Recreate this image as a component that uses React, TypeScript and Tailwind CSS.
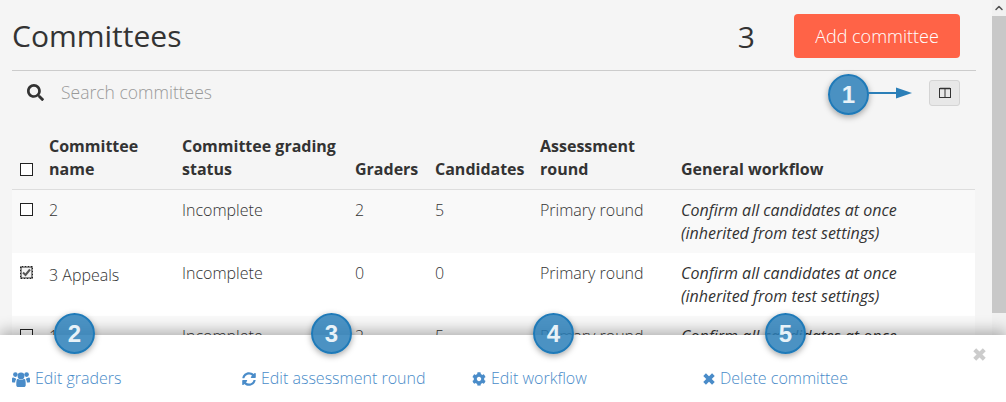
import { FaCog, FaSearch, FaSyncAlt } from "react-icons/fa";
import { ChevronUp } from "lucide-react";
import type { ReactNode } from "react";

const rows = [
  { name: "2", status: "Incomplete", graders: "2", candidates: "5", checked: false, bg: "bg-[#f9f9f9]" },
  { name: "3 Appeals", status: "Incomplete", graders: "0", candidates: "0", checked: true, bg: "bg-white" },
  { name: "1", status: "Incomplete", graders: "2", candidates: "5", checked: false, bg: "bg-[#f9f9f9]" },
];

function Checkbox({ checked }: { checked?: boolean }) {
  if (checked) {
    return (
      <svg viewBox="0 0 13 13" className="block w-[13px] h-[13px]">
        <rect x="0" y="0" width="13" height="13" fill="#222" />
        <rect x="1.5" y="1.5" width="10" height="10" fill="#f4f4f4" />
        <path d="M0.5 0.5h12v12h-12z" fill="none" stroke="#fff" strokeDasharray="1 2" />
        <path d="M3 6.5l2.5 2.5L10 3.5" fill="none" stroke="#555" strokeWidth="2" />
      </svg>
    );
  }
  return <span className="block w-[13px] h-[13px] border border-[#222] bg-white" />;
}

function TimesIcon({ className }: { className: string }) {
  return (
    <svg viewBox="0 0 12 12" className={className}>
      <path d="M1.6 1.6l8.8 8.8M10.4 1.6l-8.8 8.8" fill="none" stroke="currentColor" strokeWidth="3.8" />
    </svg>
  );
}

function UsersIcon({ className }: { className: string }) {
  return (
    <svg viewBox="0 0 18 16" className={className} fill="currentColor">
      <circle cx="9" cy="5" r="3.4" />
      <circle cx="3.4" cy="3.6" r="2.3" />
      <circle cx="14.6" cy="3.6" r="2.3" />
      <path d="M4.6 9.4c0-1 1-1.5 2-1.2.8.5 1.6.7 2.4.7s1.6-.2 2.4-.7c1-.3 2 .2 2 1.2.3 1.3.4 3 .3 4.8 0 1-.8 1.8-1.8 1.8H6.1c-1 0-1.8-.8-1.8-1.8-.1-1.8 0-3.5.3-4.8z" />
      <path d="M0 8c0-1 .6-1.6 1.4-1.4.7.4 1.4.6 2.1.6.3.4.5.8.6 1-.6.8-1 2-1 3.2H1c-.6 0-1-.4-1-1V8zM18 8c0-1-.6-1.6-1.4-1.4-.7.4-1.4.6-2.1.6-.3.4-.5.8-.6 1 .6.8 1 2 1 3.2h2.1c.6 0 1-.4 1-1V8z" />
    </svg>
  );
}

function Badge({ n, className }: { n: number; className: string }) {
  return (
    <div
      className={`absolute w-[41px] h-[41px] rounded-full border-2 border-[#1f7ab8] bg-[#2b7fb8]/85 text-[#e8f2f8] flex items-center justify-center text-[24px] font-bold shadow-[0_2px_6px_rgba(0,0,0,0.35)] [font-family:'Liberation_Sans',sans-serif] ${className}`}
    >
      {n}
    </div>
  );
}

function Action({ icon, label, className }: { icon: ReactNode; label: string; className: string }) {
  return (
    <a className={`flex items-center gap-[5px] text-[#4a8cc9] ${className}`}>
      {icon}
      {label}
    </a>
  );
}

export default function App() {
  return (
    <div className="relative w-[1006px] h-[402px] overflow-hidden flex bg-[#f5f5f5] text-[#333] font-light text-[16px] leading-[23px] [font-family:'Open_Sans',sans-serif]">
      <div className="w-[991px] pl-3 pr-4">
        {/* Title */}
        <div className="flex items-center h-[71px] border-b border-[#ccc] pr-[3px] mr-[-1px] pt-[2px]">
          <h1 className="text-[30px] font-normal leading-[40px] grow">Committees</h1>
          <span className="text-[30px] font-normal mr-[39px]">3</span>
          <button className="w-[166px] h-11 rounded bg-[#ff6347] text-white text-[18px] font-light mr-[13px]">
            Add committee
          </button>
        </div>

        {/* Search */}
        <div className="flex items-center h-[43px] pl-[15px] pr-[15px]">
          <FaSearch className="text-[#333] w-[17px] h-[17px]" />
          <span className="ml-[17px] text-[#999] text-[17.5px]">Search committees</span>
          <button className="ml-auto w-[31px] h-[26px] rounded-[3px] border border-[#d4d4d4] bg-[#e8e8e8] flex items-center justify-center">
            <svg viewBox="0 0 12 12" className="w-3 h-3">
              <rect x="0.5" y="1.5" width="11" height="9" fill="none" stroke="#333" />
              <path d="M6 1.5v9" stroke="#333" />
              <path d="M1 1.5h10" stroke="#333" strokeWidth="1.5" />
            </svg>
          </button>
        </div>

        {/* Table */}
        <table className="w-[963px] table-fixed border-collapse mt-[13px]">
          <colgroup>
            <col className="w-[29px]" />
            <col className="w-[133px]" />
            <col className="w-[173px]" />
            <col className="w-[80px]" />
            <col className="w-[105px]" />
            <col className="w-[141px]" />
            <col />
          </colgroup>
          <thead>
            <tr className="border-b border-[#ddd] text-left align-bottom font-bold">
              <th className="p-2 pb-[13px]">
                <Checkbox />
              </th>
              <th className="p-2">Committee name</th>
              <th className="p-2">Committee grading status</th>
              <th className="p-2">Graders</th>
              <th className="p-2">Candidates</th>
              <th className="p-2">Assessment round</th>
              <th className="p-2">General workflow</th>
            </tr>
          </thead>
          <tbody>
            {rows.map((row) => (
              <tr key={row.name} className={`${row.bg} align-top`}>
                <td className="p-2 pt-[13px]">
                  <Checkbox checked={row.checked} />
                </td>
                <td className={`p-2 ${row.checked ? "pt-[11px]" : "pt-[9px]"}`}>{row.name}</td>
                <td className="p-2 pt-[9px]">{row.status}</td>
                <td className="p-2 pt-[9px]">{row.graders}</td>
                <td className="p-2 pt-[9px]">{row.candidates}</td>
                <td className="p-2 pt-[9px]">Primary round</td>
                <td className="p-2 pt-[9px] italic font-normal">
                  Confirm all candidates at once
                  <br />
                  (inherited from test settings)
                </td>
              </tr>
            ))}
          </tbody>
        </table>
      </div>

      {/* Scrollbar */}
      <div className="w-[15px] ml-px bg-[#f1f1f1] flex flex-col">
        <div className="h-4 flex items-center justify-center">
          <ChevronUp className="w-3 h-3 text-[#505050]" strokeWidth={3} />
        </div>
        <div className="h-[297px] w-full bg-[#c8c8c8]" />
      </div>

      {/* Bottom action panel */}
      <div className="absolute left-0 right-0 bottom-0 h-[67px] bg-white shadow-[0_-4px_14px_rgba(0,0,0,0.3)]">
        <Action className="absolute left-3 top-[32px]" icon={<UsersIcon className="w-[18px] h-[16px]" />} label="Edit graders" />
        <Action className="absolute left-[242px] top-[32px]" icon={<FaSyncAlt className="w-[14px] h-[14px]" />} label="Edit assessment round" />
        <Action className="absolute left-[472px] top-[32px]" icon={<FaCog className="w-[14px] h-[14px]" />} label="Edit workflow" />
        <Action className="absolute left-[703px] top-[32px]" icon={<TimesIcon className="w-[12px] h-[12px]" />} label="Delete committee" />
        <TimesIcon className="absolute left-[973px] top-[13px] w-[13px] h-[13px] text-[#ccc]" />
      </div>

      {/* Callouts */}
      <Badge n={1} className="left-[828px] top-[74px]" />
      <svg className="absolute left-[868px] top-[84px] w-[44px] h-[18px]" viewBox="0 0 44 18">
        <path d="M0 9h30" stroke="#2b7fb8" strokeWidth="2" />
        <path d="M28 3.5l16 5.5-16 5.5z" fill="#2b7fb8" />
      </svg>
      <Badge n={2} className="left-[54px] top-[313px]" />
      <Badge n={3} className="left-[311px] top-[313px]" />
      <Badge n={4} className="left-[533px] top-[313px]" />
      <Badge n={5} className="left-[765px] top-[313px]" />
    </div>
  );
}
